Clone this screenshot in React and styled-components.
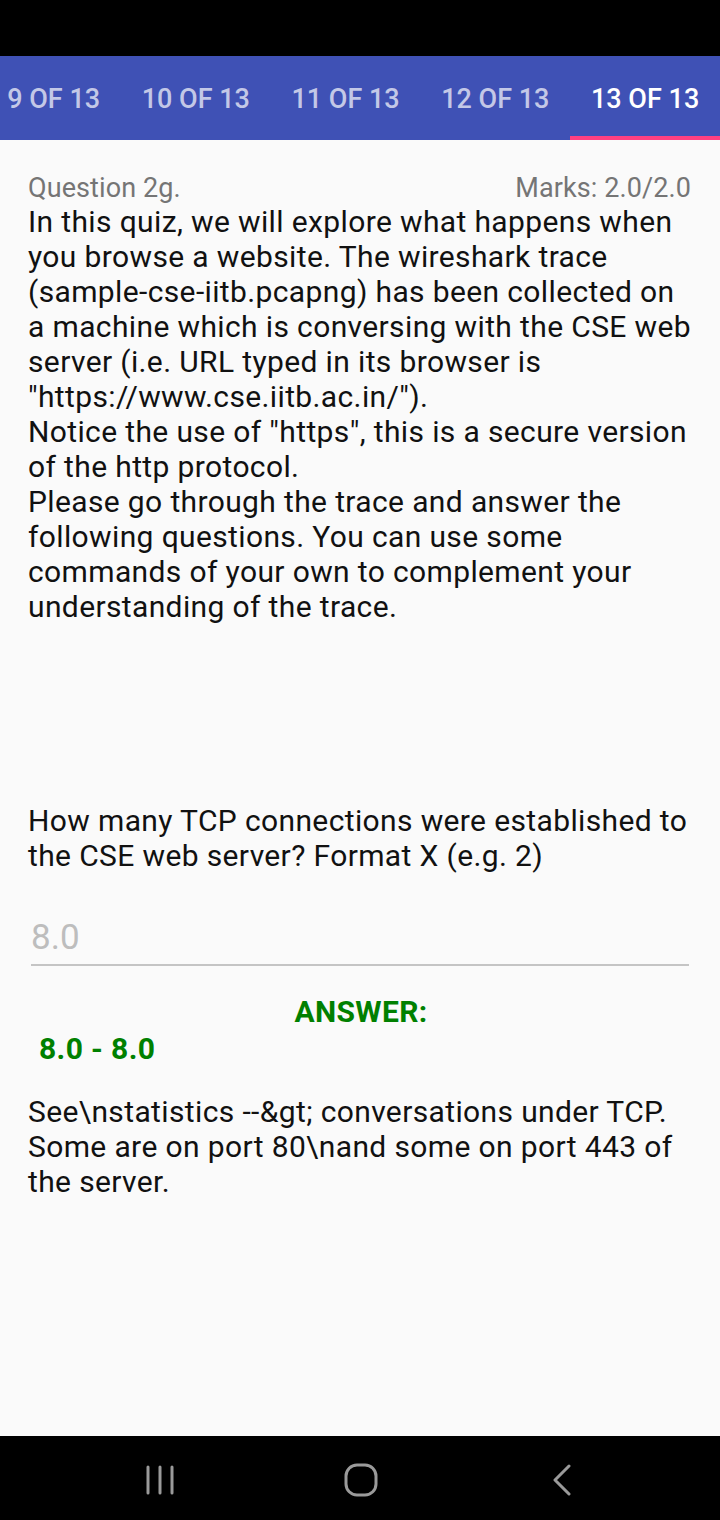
import React from 'react';
import styled, { createGlobalStyle } from 'styled-components';

const GlobalStyle = createGlobalStyle`
  html, body {
    margin: 0;
    padding: 0;
    background: #000;
  }
  body {
    font-family: 'Roboto', 'Liberation Sans', sans-serif;
  }
`;

const tabs = ['9 OF 13', '10 OF 13', '11 OF 13', '12 OF 13', '13 OF 13'];

const intro = [
  'In this quiz, we will explore what happens when you browse a website. The wireshark trace (sample-cse-iitb.pcapng) has been collected on a machine which is conversing with the CSE web server (i.e. URL typed in its browser is "https://www.cse.iitb.ac.in/").',
  'Notice the use of "https", this is a secure version of the http protocol.',
  'Please go through the trace and answer the following questions. You can use some commands of your own to complement your understanding of the trace.',
];

export default function App() {
  return (
    <Screen>
      <GlobalStyle />
      <StatusBar />
      <TabBar>
        {tabs.map((t, i) => (
          <Tab key={t} active={i === tabs.length - 1}>
            {t}
          </Tab>
        ))}
      </TabBar>
      <Content>
        <HeaderRow>
          <Muted>Question 2g.</Muted>
          <Muted>Marks: 2.0/2.0</Muted>
        </HeaderRow>
        <Body>
          {intro.map((p, i) => (
            <div key={i}>{p}</div>
          ))}
        </Body>
        <QuestionText>
          How many TCP connections were established to the CSE web server? Format X (e.g. 2)
        </QuestionText>
        <InputField>
          <InputValue>8.0</InputValue>
        </InputField>
        <AnswerLabel>ANSWER:</AnswerLabel>
        <AnswerRange>8.0 - 8.0</AnswerRange>
        <Explanation>
          See\nstatistics --&amp;gt; conversations under TCP. Some are on port 80\nand some on port 443 of the server.
        </Explanation>
      </Content>
      <NavBar>
        <NavButton>
          <svg width="28" height="30" viewBox="0 0 28 30">
            <g stroke="#9a9a9a" strokeWidth="3" strokeLinecap="round">
              <line x1="2" y1="2" x2="2" y2="28" />
              <line x1="14" y1="2" x2="14" y2="28" />
              <line x1="26" y1="2" x2="26" y2="28" />
            </g>
          </svg>
        </NavButton>
        <NavButton>
          <svg width="34" height="34" viewBox="0 0 34 34">
            <rect x="2" y="2" width="30" height="30" rx="11" fill="none" stroke="#9a9a9a" strokeWidth="3" />
          </svg>
        </NavButton>
        <NavButton>
          <svg width="20" height="32" viewBox="0 0 20 32">
            <polyline points="17,2 3,16 17,30" fill="none" stroke="#9a9a9a" strokeWidth="3" strokeLinecap="round" strokeLinejoin="round" />
          </svg>
        </NavButton>
      </NavBar>
    </Screen>
  );
}

const Screen = styled.div`
  width: 720px;
  height: 1520px;
  display: flex;
  flex-direction: column;
  overflow: hidden;
  background: #fafafa;
`;

const StatusBar = styled.div`
  height: 56px;
  flex-shrink: 0;
  background: #000;
`;

const TabBar = styled.div`
  height: 84px;
  flex-shrink: 0;
  display: flex;
  justify-content: flex-end;
  overflow: hidden;
  background: #3f51b5;
`;

const Tab = styled.div`
  flex-shrink: 0;
  display: flex;
  align-items: center;
  justify-content: center;
  padding: 6px 20.75px 0;
  font-size: 27px;
  font-weight: 500;
  color: ${({ active }) => (active ? '#ffffff' : 'rgba(255, 255, 255, 0.7)')};
  border-bottom: 4px solid ${({ active }) => (active ? '#ff4081' : 'transparent')};
  box-sizing: border-box;
`;

const Content = styled.div`
  flex: 1;
  display: flex;
  flex-direction: column;
  padding: 32px 29px 0 28px;
  background: #fafafa;
  color: #111;
  letter-spacing: 0.37px;
`;

const HeaderRow = styled.div`
  display: flex;
  justify-content: space-between;
  align-items: center;
  height: 32px;
  letter-spacing: 0.1px;
`;

const Muted = styled.span`
  font-size: 27px;
  color: #757575;
`;

const Body = styled.div`
  font-size: 30px;
  line-height: 35px;
`;

const QuestionText = styled.div`
  margin-top: 179px;
  font-size: 30px;
  line-height: 35px;
`;

const InputField = styled.div`
  margin: 44px 2px 0 3px;
  padding-bottom: 6px;
  border-bottom: 2px solid #c4c4c4;
`;

const InputValue = styled.div`
  font-size: 35px;
  line-height: 41px;
  letter-spacing: 0;
  color: #bdbdbd;
`;

const AnswerLabel = styled.div`
  margin-top: 30px;
  text-align: center;
  font-size: 30px;
  line-height: 32px;
  font-weight: 700;
  color: #008000;
  padding-left: 3px;
`;

const AnswerRange = styled.div`
  margin-top: 5px;
  padding-left: 11px;
  font-size: 30px;
  line-height: 32px;
  font-weight: 700;
  color: #008000;
`;

const Explanation = styled.div`
  margin-top: 29px;
  font-size: 30px;
  line-height: 35px;
`;

const NavBar = styled.div`
  height: 84px;
  flex-shrink: 0;
  box-sizing: border-box;
  background: #000;
  display: grid;
  grid-template-columns: repeat(3, 1fr);
  align-items: center;
  padding: 4px 58px 0 60px;
`;

const NavButton = styled.div`
  display: flex;
  justify-content: center;
  align-items: center;
`;
